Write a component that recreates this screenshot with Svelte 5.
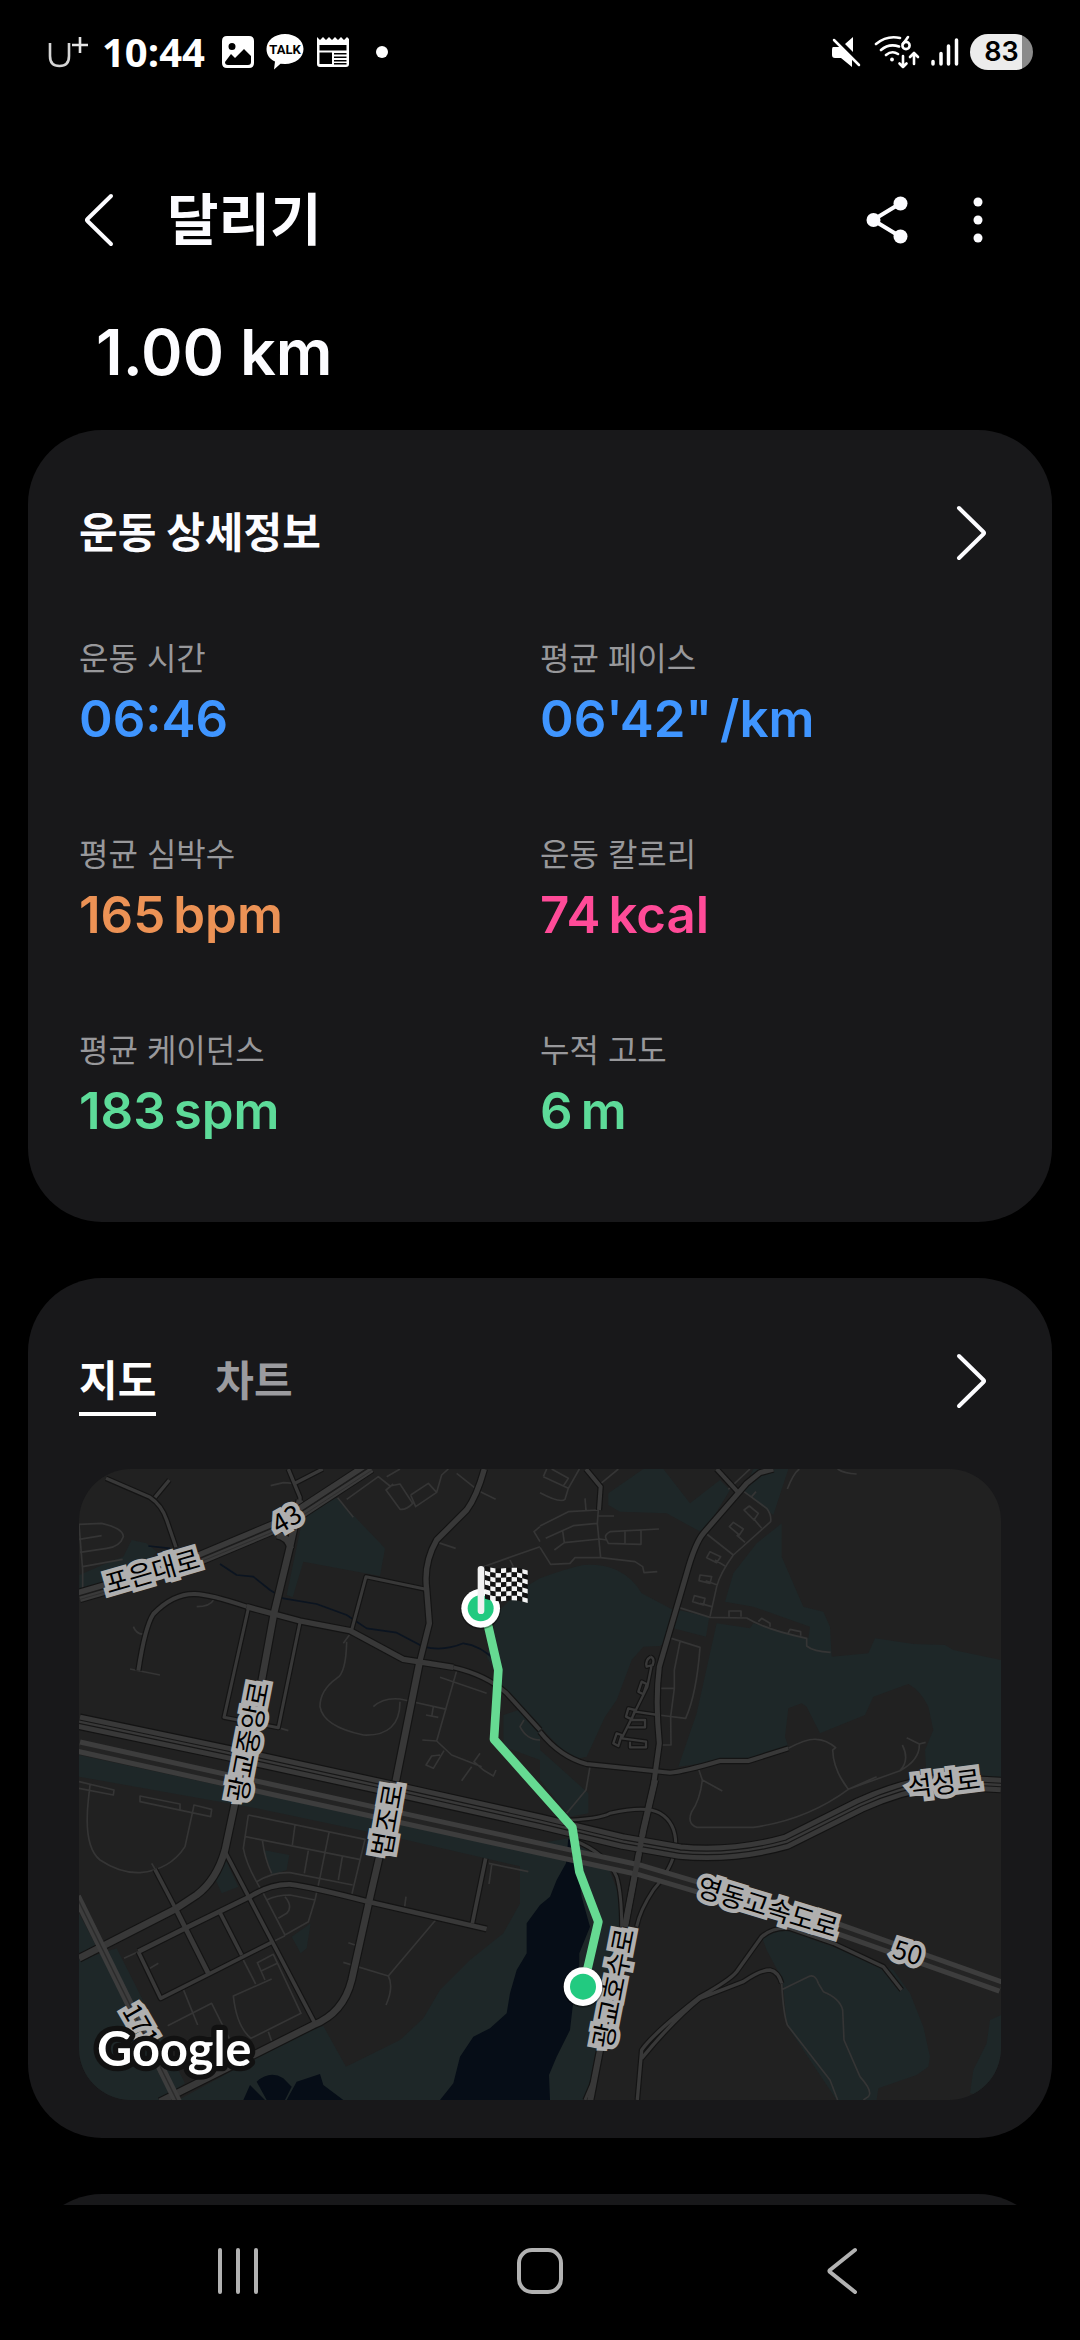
<script>
  const stats = [
    { label: '운동 시간', value: '06:46', unit: '', tone: 'blue' },
    { label: '평균 페이스', value: '06\'42"', unit: '/km', tone: 'blue' },
    { label: '평균 심박수', value: '165', unit: 'bpm', tone: 'orange' },
    { label: '운동 칼로리', value: '74', unit: 'kcal', tone: 'pink' },
    { label: '평균 케이던스', value: '183', unit: 'spm', tone: 'green' },
    { label: '누적 고도', value: '6', unit: 'm', tone: 'green' }
  ];

  let tab = $state('map');

  // The map is drawn in four tiles; each tile has its own origin.
  const tile = {
    nw: 'translate(-27 -27)',
    ne: 'translate(1383 -27)',
    sw: 'translate(-27 933)',
    se: 'translate(1383 933)'
  };

  const parks = [
    ['nw', 'M185 240L230 250L260 275L200 345L28 398V345L120 305L160 290Z M700 165L800 113L945 265L930 348L700 305L668 412L650 405Z M1300 765L1345 750L1410 810V900L1300 860Z'],
    ['sw', 'M27 -75L560 40L1000 130L1410 215V990H270L730 740L760 738L828 860L990 780L1060 715L1110 630L1200 540L1300 460L1378 320L1390 268L1000 178L560 85L27 -10Z'],
    ['sw', 'M27 540L140 505L345 910L270 962H27Z M27 400L80 500L27 520Z M465 235L505 320L455 340L435 295Z M580 210L658 225L650 270L605 285Z M665 470L722 430L710 505L692 520Z'],
    ['se', 'M-60 200L85 175L200 250L235 340L245 450L200 600L155 960H-60Z'],
    ['se', 'M665 470L720 445L880 500L1060 570L1110 640L1150 740L1170 830L1165 860L1130 885L1015 925L1010 960H890L740 735L728 600L680 510Z M1383 705L1350 720L1340 790L1300 870L1290 940L1383 960Z'],
    ['ne', 'M0 355Q80 325 130 315Q190 312 230 330Q280 355 305 400L400 450L385 540L360 558L310 560L275 600L230 720L195 770L140 890L95 900L0 800L-110 680L-160 590L-130 460L-60 390Z'],
    ['ne', 'M205 100L310 27H370L450 130L540 60L570 90L490 220L380 160L240 155L205 135Z M640 27H745L700 165L610 95Z M0 870L40 905L145 1000V1060L90 1070L0 960Z'],
    ['ne', 'M725 190V290L790 440L850 455L870 500L875 590L985 580L1005 535L1120 552L1215 555L1240 570L1383 600V960H1160L1155 870L1180 810L1165 740Q1140 690 1105 672L1000 710L975 765L840 820L800 740L785 730L745 745L735 830L745 860L630 900L540 903L415 920L470 760L530 490L630 505L640 490L805 535L810 500L640 440L555 425L580 340L650 250Z M415 450L508 470L498 530L400 505Z']
  ];

  const water = [
    ['se', 'M85 175L112 200V260L125 350L150 440L118 520V600L98 680L90 750L50 830L27 885L30 960H-300L-260 910L-240 830L-200 770L-150 745L-100 700L-90 640L-70 570L-40 520V430L0 375L30 350L50 300L78 250Z'],
    ['sw', 'M520 960L540 915L585 960Z M560 905Q600 870 640 895L665 920L645 960H590Z M650 960L680 905L750 882L760 915L820 960Z']
  ];

  const lanes = [
    ['nw', 'M27 193L95 190Q160 205 160 230Q150 260 110 265L30 277M27 238L95 227M27 193L38 330V390M38 320L158 298M602 77L640 68L675 70M830 118L925 50L960 78L990 72L1028 130Q1010 150 990 148L948 90L970 72M1022 105L1075 70L1100 97L1037 140L1022 105M1100 97L1115 45L1135 27M950 50L990 27M1160 40L1225 92L1277 118M803 113L850 172M1105 248L1157 265M1240 320L1410 260M1410 200L1392 215L1410 245M1320 300L1330 320'],
    ['nw', 'M838 525L820 550M830 545Q828 640 800 655Q750 690 750 740Q760 800 880 825Q990 830 990 725M910 740Q940 712 990 717L1130 748M1110 652L1250 700M1160 632L1100 843L1145 885L1235 920M1100 843L1057 840M1122 872L1090 925L1068 915L1085 888L1110 885M1068 765L1105 772M1090 740L1085 770M1205 920L1175 962M1230 880L1212 905L1240 930L1270 948L1278 930M180 627L270 645M190 500Q200 525 222 522M380 440Q420 440 432 418M625 803L655 812M1410 840Q1370 840 1350 800L1362 780'],
    ['sw', 'M27 25L130 45L132 30L27 5M60 15L55 60Q40 200 90 240Q150 280 210 278Q300 270 345 200L368 95L372 75L425 88L422 110L210 65V48L330 72V88M535 105L885 178L845 345M535 105L520 205Q530 260 580 340L645 465L715 425L735 360L660 345Q620 345 590 360M527 170L868 238M675 135L667 195M777 158L750 292L735 360M715 212L703 280M817 230L805 300M577 180Q585 240 605 280M560 305Q610 275 660 278L848 315M645 350Q670 380 650 400L625 415M605 487L645 467'],
    ['sw', 'M520 540L557 612M605 597L490 648Q500 740 543 775L693 700L610 523L562 548L585 600M575 572L622 550M595 755L607 790M340 628L383 735M293 737L425 670L480 780M162 535L205 515M240 565L265 550M835 488L855 495M820 547L955 588L1097 420M955 588Q972 620 948 675M1008 350L1004 380M1257 250L1375 275M1265 255L1257 312M245 250L258 272'],
    ['ne', 'M10 50L20 27M10 50L85 85L118 27M70 78L85 55L35 27M0 98Q60 130 75 118L85 85M183 70L235 27M135 115L138 150M0 198L85 155L175 150L172 190L100 197L17 235M172 190L182 293M175 168H222M68 213L73 248L43 270M73 248L180 237L200 240Q190 225 210 215L357 207M200 240L205 250L303 253V210M255 212V250M0 262L32 313L90 310L105 293L182 293L285 305L308 320L312 338L352 335'],
    ['ne', 'M608 92L680 145Q695 165 692 185L580 285Q540 340 530 380L510 470M500 222L580 285M640 175L665 205M590 225L615 247M525 300L555 318M497 362L532 375M480 430L515 440M612 150L628 138L655 160L642 180ZM568 200L580 187L610 207L598 225ZM510 275L542 290L530 308L500 293ZM480 345L515 350L510 370L477 362ZM463 407L495 415L490 435L458 425ZM635 110L648 95M565 88L630 27M742 87Q760 40 778 27M893 27Q910 40 950 42'],
    ['ne', 'M418 443L510 472L620 474Q680 510 800 535V558Q820 575 872 577M567 470V453H603V470M655 485L665 475L690 490V500M743 522L750 508L782 515V527M387 533L480 562Q470 700 437 775L355 765M420 545L403 630V685H355M403 685L392 770L393 855H360M745 865Q800 835 830 838Q860 840 887 863L878 870Q880 930 925 988L1080 932Q1140 900 1138 852L1100 833M1138 852L1157 847M1080 932Q1110 900 1087 855M925 988L900 950M475 925L487 960Q480 1020 455 1055Q440 1090 470 1102H640Q800 1080 925 988L1010 950M487 960L547 993M150 920L138 990L80 1060'],
    ['se', 'M728 628L805 590Q825 580 835 610L850 635Q900 655 908 690L912 780L960 890Q1000 935 985 950L970 960M725 610Q730 700 742 735L870 900L893 960']
  ];

  // [tile, width, path]
  const roads = [
    ['nw', 10, 'M108 55L240 112Q275 135 290 180L318 262M255 112L298 60M655 27L690 112V130M675 70L758 27'],
    ['nw', 9, 'M535 445L462 772L625 803L690 487M845 510L888 350L1068 388'],
    ['nw', 12, 'M205 632Q225 500 250 462Q310 400 375 402Q420 403 530 440M1150 622Q1250 645 1310 700L1410 810'],
    ['nw', 16, 'M530 440L690 483L840 512L1000 598L1150 622M1243 27Q1220 110 1190 150L1100 240Q1060 310 1070 388L1078 490L1048 610'],
    ['nw', 20, 'M1048 610L975 975M620 225Q655 230 662 265M690 120L660 260L612 460L570 690'],
    ['sw', 20, 'M498 55L465 210Q440 300 380 345L315 388L27 535M935 200L897 365L845 600Q820 700 730 735L270 965'],
    ['sw', 11, 'M465 215L735 730M450 398L515 525M205 515L272 655L605 487M1247 235L1207 430M255 268L318 388'],
    ['sw', 14, 'M318 388L415 580M205 515L345 445L540 350Q600 312 660 313Q720 320 895 365L1250 447'],
    ['ne', 12, 'M0 815Q60 890 140 912L390 938Q430 935 540 903H625L745 865M138 27L182 80L177 150M530 27L595 98'],
    ['ne', 15, 'M700 27L660 38L620 70L490 220Q465 250 440 340L358 620Q345 720 358 850L340 980'],
    ['ne', 7, 'M332 590Q345 595 338 615L320 620Q315 600 332 590M335 615L322 680L285 755L355 765M305 665L320 672L310 703L295 695ZM265 745L285 750L275 778L258 770ZM275 780H315V802H265M285 755L245 835M230 820L245 825L235 858L220 850ZM245 835L318 845V862H270V845'],
    ['se', 18, 'M345 0L310 150L255 440M180 810L150 965'],
    ['se', 9, 'M60 122Q180 118 210 100Q320 75 360 100Q410 130 407 200Q400 260 340 330Q300 390 290 440M100 180Q200 220 230 290Q245 340 245 440M135 960L165 890'],
    ['se', 10, 'M750 445Q700 440 665 470L590 575Q570 600 480 650Q340 760 305 810L292 960M305 835Q400 720 480 655L610 605Q660 570 690 570Q715 575 725 610M750 445L880 490L1030 560L1085 630']
  ];

  const trunk = 'M-1383 -175L-940 -82L-450 25L0 125L250 185L420 215Q580 230 740 185L960 75Q1080 20 1200 5L1383 15';
  const expressway = 'M-1383 -100L-810 27L-410 115L0 205L300 270L470 320L890 445L1383 620';

  // [tile, x, y, angle, text]
  const labels = [
    ['nw', 247, 335, -16, '포은대로'],
    ['nw', 650, 177, -30, '43'],
    ['nw', 536, 845, -79, '광교중앙로'],
    ['sw', 953, 120, -80, '법조로'],
    ['sw', 212, 735, 60, '171'],
    ['se', 222, 625, -79, '광교호수로'],
    ['se', 683, 383, 17, '영동고속도로'],
    ['se', 1103, 518, 17, '50'],
    ['se', 1212, 10, -7, '석성로']
  ];

  const cols = 8;
  const rows = 7;
  const wave = (x) => 318 + (x - 1245) * 0.1 + Math.sin((x - 1245) / 20) * 4;
  const cells = [];
  for (let c = 0; c < cols; c++) {
    for (let r = 0; r < rows; r++) {
      const x = 1245 + c * 16;
      const a = wave(x) + r * 14;
      const b = wave(x + 16) + r * 14;
      cells.push({ dark: (c + r) % 2 === 0, d: `M${x} ${a}L${x + 16} ${b}V${b + 14}L${x} ${a + 14}Z` });
    }
  }
</script>

<div class="screen">
  <div class="status">
    <div class="group">
      <svg class="carrier" width="40" height="32" viewBox="0 0 40 32" aria-label="U+">
        <path d="M2 7V20Q2 30 11.500 30T21 20V7" fill="none" stroke="#d5d5d5" stroke-width="2.600" />
        <path d="M24 9H40M32 1V17" fill="none" stroke="#e5e5e5" stroke-width="2.600" />
      </svg>
      <time>10:44</time>
      <svg width="32" height="32" viewBox="0 0 32 32">
        <path fill="#fff" fill-rule="evenodd" d="M5 0H27Q32 0 32 5V27Q32 32 27 32H5Q0 32 0 27V5Q0 0 5 0ZM10 7A3.500 3.500 0 1 0 10 14A3.500 3.500 0 1 0 10 7ZM3 26L9 18L13 22L22 13L29 20V26Q29 29 26 29H6Q3 29 3 26Z" />
      </svg>
      <svg width="38" height="36" viewBox="0 0 38 36">
        <path fill="#fff" d="M19 0C29.500 0 37.500 6.500 37.500 15S29.500 30 19 30L14.500 29.700L8 35.500L9 27.500C3.500 25 .5 20.500 .5 15C.5 6.500 8.500 0 19 0Z" />
        <text x="19" y="20" text-anchor="middle" class="talk">TALK</text>
      </svg>
      <svg width="34" height="30" viewBox="0 0 34 30">
        <path fill="#fff" fill-rule="evenodd" d="M1 0L4 3L7 0L10 3L13 0L16 3L19 0L22 3L25 0L28 3L31 0L33 2V27Q33 30 30 30H4Q1 30 1 27ZM3.500 8V13.500H30.500V8ZM3.500 15.500V27H16V15.500ZM18 16V17.500H30.500V16ZM18 19.500V21H30.500V19.500ZM18 23V24.500H30.500V23ZM18 26V27.500H30.500V26Z" />
      </svg>
      <span class="dot"></span>
    </div>
    <div class="group right">
      <svg width="32" height="32" viewBox="0 0 32 32">
        <path fill="#fff" d="M2 11H9L21 23V31L10 22H4Q1 22 1 19V14Q1 11 2 11ZM14 8L22 1V16Z" />
        <path d="M3 4L28 29" stroke="#fff" stroke-width="2.500" stroke-linecap="round" />
      </svg>
      <svg width="46" height="34" viewBox="0 0 46 34" fill="none" stroke="#fff" stroke-width="2.600" stroke-linecap="round" stroke-linejoin="round">
        <path d="M2 9Q13 0 26 3M7 15Q15 8 25 11.500M12 20Q18 15 24 19" />
        <circle cx="18" cy="24.500" r="1.900" fill="#fff" stroke="none" />
        <path d="M34 2L29 9" />
        <circle cx="32" cy="10.500" r="3.600" />
        <path d="M29 21V32M25.500 28.500L29 32L32.500 28.500M40 29V18M36 22L40 18L44 22" />
      </svg>
      <svg width="28" height="32" viewBox="0 0 28 32" stroke="#fff" stroke-width="3.500" stroke-linecap="round">
        <path d="M2 25.500V28M10 17.500V28M17.500 10V28M25.500 4V28" />
      </svg>
      <span class="battery">83</span>
    </div>
  </div>

  <header>
    <button class="icon" aria-label="뒤로">
      <svg width="32" height="56" viewBox="0 0 32 56"><path d="M28 4L4.500 27Q3.500 28 4.500 29L28 52" /></svg>
    </button>
    <h1>달리기</h1>
    <button class="icon" aria-label="공유">
      <svg width="44" height="52" viewBox="0 0 44 52">
        <path d="M36 9L8 26L36 43" />
        <g fill="#fcfcff"><circle cx="35.500" cy="9.500" r="7" /><circle cx="8.500" cy="26" r="7" /><circle cx="35.500" cy="42.500" r="7" /></g>
      </svg>
    </button>
    <button class="icon more" aria-label="더보기">
      <svg width="12" height="52" viewBox="0 0 12 52">
        <g fill="#fcfcff"><circle cx="6" cy="8" r="4.500" /><circle cx="6" cy="26" r="4.500" /><circle cx="6" cy="44" r="4.500" /></g>
      </svg>
    </button>
  </header>

  <main>
    <p class="distance">1.00 km</p>

    <section class="card details">
      <div class="head">
        <h2>운동 상세정보</h2>
        <button class="icon" aria-label="운동 상세정보 열기">
          <svg width="32" height="56" viewBox="0 0 32 56"><path d="M3 3L27.500 27Q28.500 28 27.500 29L3 53" /></svg>
        </button>
      </div>
      <dl>
        {#each stats as s}
          <div>
            <dt>{s.label}</dt>
            <dd class={s.tone}>{s.value}{#if s.unit}<span>{s.unit}</span>{/if}</dd>
          </div>
        {/each}
      </dl>
    </section>

    <section class="card track">
      <div class="head">
        <div class="tabs" role="tablist">
          <button role="tab" aria-selected={tab === 'map'} class:active={tab === 'map'} onclick={() => (tab = 'map')}>지도</button>
          <button role="tab" aria-selected={tab === 'chart'} class:active={tab === 'chart'} onclick={() => (tab = 'chart')}>차트</button>
        </div>
        <button class="icon" aria-label="지도 열기">
          <svg width="32" height="56" viewBox="0 0 32 56"><path d="M3 3L27.500 27Q28.500 28 27.500 29L3 53" /></svg>
        </button>
      </div>
      <svg class="map" viewBox="0 0 2766 1893" role="img" aria-label="달리기 경로 지도">
        <rect width="2766" height="1893" fill="#212121" />
        {#each parks as [t, d]}<path transform={tile[t]} {d} fill="#1e2728" />{/each}
        {#each water as [t, d]}<path transform={tile[t]} {d} fill="#060d17" />{/each}
        <path transform={tile.nw} class="stream" d="M235 258L300 265M450 312L500 345L550 350L600 390L640 415L740 432L830 465L890 505L980 518L1060 560Q1120 575 1180 550Q1230 555 1280 605" />
        {#each lanes as [t, d]}<path transform={tile[t]} {d} class="lane" />{/each}
        {#each roads as [t, w, d]}<path transform={tile[t]} {d} class="casing" stroke-width={w + 7} />{/each}
        {#each roads as [t, w, d]}<path transform={tile[t]} {d} class="road" stroke-width={w} />{/each}

        <g transform={tile.nw} fill="none">
          <path d="M27 408L130 378L390 295L640 190L900 20" stroke="#151515" stroke-width="44" />
          <path d="M27 408L130 378L390 295L640 190L900 20" stroke="#3a3a3a" stroke-width="38" />
          <path d="M27 408L130 378L390 295L640 190L900 20" stroke="#1c1c1c" stroke-width="5" />
          <path d="M27 419L130 389L390 306L645 201L905 31" stroke="#282828" stroke-width="2" />
        </g>
        <g transform={tile.se} fill="none" stroke-linejoin="round">
          <path d={trunk} stroke="#131313" stroke-width="50" />
          <path d={trunk} stroke="#383838" stroke-width="43" />
          <path d={trunk} stroke="#171717" stroke-width="14" />
          <path d={trunk} stroke="#383838" stroke-width="7" />
          <path d={expressway} stroke="#3d3d3d" stroke-width="44" />
          <path d={expressway} stroke="#242424" stroke-width="14" />
          <path d="M345 0L310 150L255 440" stroke="#383838" stroke-width="16" />
        </g>
        <g transform={tile.sw} fill="none">
          <path d="M20 350L325 970" stroke="#3d3d3d" stroke-width="26" />
          <path d="M20 350L325 970" stroke="#2b2b2b" stroke-width="4" />
        </g>

        {#each labels as [t, x, y, a, text]}
          <g transform={tile[t]}><text class="street" transform={`translate(${x} ${y}) rotate(${a})`} dy="28" text-anchor="middle">{text}</text></g>
        {/each}
        <text class="google" x="54" y="1791">Google</text>

        <path transform={tile.se} class="route" d="M-178 -515L-155 -460L-125 -330L-138 -122L97 142L118 275L175 425L130 620" />
        <g transform={tile.se}>
          <circle cx="129" cy="622" r="61" fill="#0005" />
          <circle cx="129" cy="620" r="58" fill="#fff" />
          <circle cx="129" cy="620" r="39" fill="#22ca80" />
        </g>
        <g transform={tile.nw}>
          <circle cx="1232" cy="447" r="61" fill="#0005" />
          <circle cx="1232" cy="445" r="58" fill="#fff" />
          <circle cx="1232" cy="445" r="39" fill="#22ca80" />
          {#each cells as cell}<path d={cell.d} fill={cell.dark ? '#111' : '#f4f4f4'} />{/each}
          <path d="M1233 328V452" stroke="#f1f1f1" stroke-width="20" stroke-linecap="round" />
        </g>
      </svg>
    </section>

    <section class="card next"></section>
  </main>

  <nav>
    <button aria-label="최근 앱">
      <svg width="44" height="48" viewBox="0 0 44 48"><path d="M4 3V45M22 3V45M40 3V45" /></svg>
    </button>
    <button aria-label="홈">
      <svg width="48" height="48" viewBox="0 0 48 48"><rect x="3" y="3" width="42" height="42" rx="13" /></svg>
    </button>
    <button aria-label="뒤로">
      <svg width="32" height="48" viewBox="0 0 32 48"><path d="M29 3L4 23Q3 24 4 25L29 45" /></svg>
    </button>
  </nav>
</div>

<style>
  :global(body) {
    margin: 0;
    background: #000;
  }
  .screen {
    height: 100vh;
    display: flex;
    flex-direction: column;
    overflow: hidden;
    background: #000;
    color: #fcfcff;
    font-family: Inter, 'Noto Sans CJK KR', sans-serif;
  }
  h1, h2, p, dl, dt, dd {
    margin: 0;
  }
  svg {
    display: block;
    flex: none;
  }
  button {
    border: 0;
    padding: 0;
    background: none;
    color: inherit;
    font: inherit;
    cursor: pointer;
  }
  .status {
    display: flex;
    justify-content: space-between;
    height: 104px;
    padding: 0 47px 0 48px;
    flex: none;
  }
  .group {
    display: flex;
    align-items: center;
    gap: 12px;
  }
  .carrier {
    margin-right: 2px;
  }
  time {
    margin-right: 5px;
    font: 700 40px/48px 'Open Sans', sans-serif;
    color: #fff;
  }
  .talk {
    font: 700 13px Roboto, sans-serif;
    fill: #000;
  }
  .dot {
    width: 12px;
    height: 12px;
    margin-left: 14px;
    border-radius: 50%;
    background: #fff;
  }
  .right {
    gap: 11px;
  }
  .battery {
    width: 63px;
    border-radius: 18px;
    background: linear-gradient(90deg, #ececec 82%, #8a8a8a 82%);
    color: #000;
    font-size: 27px;
    font-weight: 600;
    line-height: 36px;
    text-align: center;
  }
  header {
    display: flex;
    align-items: center;
    height: 106px;
    margin-top: 63px;
    padding: 0 83px;
    flex: none;
  }
  h1 {
    flex: 1;
    margin-left: 52px;
    font-size: 56px;
    font-weight: 700;
    line-height: 80px;
  }
  .icon {
    display: flex;
    align-items: center;
  }
  .icon path {
    fill: none;
    stroke: #fcfcff;
    stroke-width: 4;
    stroke-linecap: round;
    stroke-linejoin: round;
  }
  .more {
    margin: 0 13px 0 63px;
  }
  main {
    flex: 1;
    min-height: 0;
    overflow: hidden;
    padding: 39px 28px 0;
  }
  .distance {
    margin: 0 68px 38px;
    font-size: 63px;
    font-weight: 600;
    line-height: 80px;
  }
  .card {
    margin-bottom: 56px;
    padding: 68px 51px 0;
    border-radius: 74px;
    background: #18181a;
  }
  .details {
    padding-bottom: 81px;
  }
  .track {
    padding-bottom: 38px;
  }
  .next {
    height: 200px;
  }
  .head {
    display: flex;
    align-items: center;
    justify-content: space-between;
    height: 70px;
    padding-right: 13px;
  }
  h2 {
    font-size: 42px;
    font-weight: 700;
    line-height: 64px;
  }
  dl {
    display: grid;
    grid-template-columns: 1fr 1fr;
    row-gap: 86px;
    margin-top: 71px;
  }
  dt {
    margin-bottom: 10px;
    color: #98989b;
    font-size: 32px;
    line-height: 40px;
  }
  dd {
    font-size: 51px;
    font-weight: 600;
    line-height: 60px;
  }
  dd span {
    margin-left: 8px;
  }
  .blue { color: #3f95ff; }
  .orange { color: #ec9255; }
  .pink { color: #ff4b98; }
  .green { color: #5ddb99; }
  .tabs {
    display: flex;
    gap: 59px;
  }
  .tabs button {
    padding-top: 4px;
    border-bottom: 4px solid transparent;
    color: #9b9b9f;
    font-size: 42px;
    font-weight: 700;
    line-height: 62px;
  }
  .tabs .active {
    border-color: #fff;
    color: #fff;
  }
  .map {
    width: 100%;
    height: auto;
    margin-top: 53px;
    border-radius: 52px;
    overflow: hidden;
  }
  .lane, .casing, .road, .stream, .route {
    fill: none;
    stroke-linejoin: round;
  }
  .lane {
    stroke: #353535;
    stroke-width: 5;
  }
  .casing {
    stroke: #141414;
  }
  .road {
    stroke: #383838;
  }
  .stream {
    stroke: #0b1420;
    stroke-width: 5;
  }
  .route {
    stroke: #66da92;
    stroke-width: 26;
  }
  .street {
    font: 400 79px 'Noto Sans CJK KR', sans-serif;
    fill: #000;
    stroke: #afafaf;
    stroke-width: 26;
    stroke-linejoin: miter;
    stroke-miterlimit: 2;
    paint-order: stroke;
  }
  .google {
    font: 700 146px Lato, sans-serif;
    fill: #fff;
    stroke: #111;
    stroke-width: 32;
    stroke-linejoin: round;
    paint-order: stroke;
  }
  nav {
    display: grid;
    grid-template-columns: repeat(3, 1fr);
    height: 132px;
    padding: 0 8% 3px;
    flex: none;
  }
  nav button {
    display: flex;
    align-items: center;
    justify-content: center;
  }
  nav path, nav rect {
    fill: none;
    stroke: #b2b2b2;
    stroke-width: 4;
    stroke-linecap: round;
    stroke-linejoin: round;
  }
</style>
